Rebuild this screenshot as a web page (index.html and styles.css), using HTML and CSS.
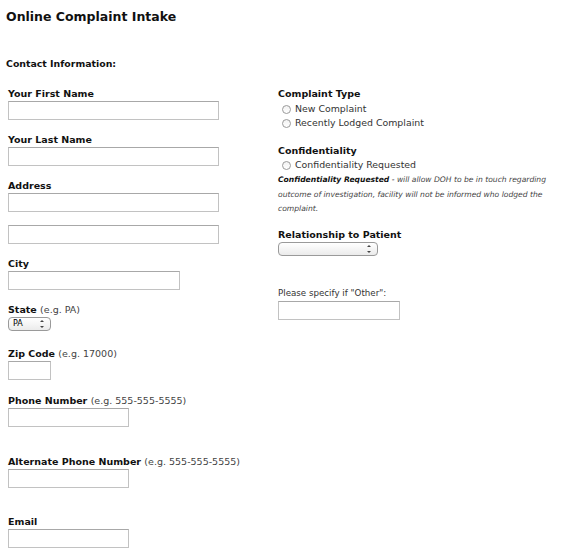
FILE: index.html
```html
<!DOCTYPE html>
<html>
<head>
<meta charset="utf-8">
<link rel="stylesheet" href="styles.css">
</head>
<body>
<h1 class="title">Online Complaint Intake</h1>
<h2 class="section">Contact Information:</h2>
<div class="cols">
  <div class="left">
    <div class="field"><div class="label">Your First Name</div><input class="text w-long" type="text"></div>
    <div class="field"><div class="label">Your Last Name</div><input class="text w-long" type="text"></div>
    <div class="field"><div class="label">Address</div><input class="text w-long" type="text"></div>
    <div class="field nolabel"><input class="text w-long" type="text"></div>
    <div class="field"><div class="label">City</div><input class="text w-city" type="text"></div>
    <div class="field state"><div class="label">State <span class="hint">(e.g. PA)</span></div>
      <span class="sel sel-state"><select><option>PA</option></select><span class="arrows"></span></span></div>
    <div class="field zip"><div class="label">Zip Code <span class="hint">(e.g. 17000)</span></div><input class="text w-zip" type="text"></div>
    <div class="field wide-gap"><div class="label">Phone Number <span class="hint">(e.g. 555-555-5555)</span></div><input class="text w-phone" type="text"></div>
    <div class="field wide-gap2"><div class="label">Alternate Phone Number <span class="hint">(e.g. 555-555-5555)</span></div><input class="text w-phone" type="text"></div>
    <div class="field"><div class="label">Email</div><input class="text w-phone" type="text"></div>
  </div>
  <div class="right">
    <div class="group first">
      <div class="label">Complaint Type</div>
      <label class="radio"><span class="dot"></span>New Complaint</label>
      <label class="radio"><span class="dot"></span>Recently Lodged Complaint</label>
    </div>
    <div class="group conf">
      <div class="label">Confidentiality</div>
      <label class="radio"><span class="dot"></span>Confidentiality Requested</label>
      <p class="note"><b>Confidentiality Requested</b> - will allow DOH to be in touch regarding outcome of investigation, facility will not be informed who lodged the complaint.</p>
    </div>
    <div class="group rel">
      <div class="label">Relationship to Patient</div>
      <span class="sel sel-rel"><select><option></option></select><span class="arrows"></span></span>
    </div>
    <div class="group">
      <div class="plain">Please specify if "Other":</div>
      <input class="text w-other" type="text">
    </div>
  </div>
</div>
</body>
</html>
```
FILE: styles.css
```css
html, body { background: #fff; }
body {
  margin: 0;
  padding: 9px 0 0 6px;
  font-family: "DejaVu Sans", Verdana, sans-serif;
  color: #111;
}
.title {
  margin: 0;
  font-size: 12.5px;
  line-height: 16px;
  font-weight: bold;
}
.section {
  margin: 32px 0 0 0;
  font-size: 9.4px;
  line-height: 14px;
  font-weight: bold;
}
.cols {
  display: flex;
  margin-top: 16px;
}
.left {
  flex: none;
  box-sizing: border-box;
  width: 272px;
  padding-left: 2px;
}
.right {
  flex: none;
  width: 290px;
}
.label {
  font-size: 9.5px;
  line-height: 14px;
  font-weight: bold;
  color: #111;
}
.hint {
  font-weight: normal;
  color: #444;
}
.field { margin-bottom: 13px; }
.field.state { margin-bottom: 16px; }
.field.zip { margin-bottom: 14px; }
.field.wide-gap { margin-bottom: 28px; }
.field.wide-gap2 { margin-bottom: 27px; }
.text {
  display: block;
  box-sizing: border-box;
  height: 19px;
  margin: 0;
  padding: 0 3px;
  border: 1px solid #c2c2c2;
  border-top-color: #a8a8a8;
  background: #fff;
  font: 10px "DejaVu Sans", sans-serif;
}
.w-long { width: 211px; }
.w-city { width: 172px; }
.w-zip { width: 43px; }
.w-phone { width: 121px; }
.w-other { width: 122px; }
.sel {
  position: relative;
  display: block;
  width: fit-content;
}
.sel select {
  appearance: none;
  -webkit-appearance: none;
  display: block;
  box-sizing: border-box;
  height: 14px;
  margin: 0;
  padding: 0 0 1px 4px;
  border: 1px solid #9a9a9a;
  border-radius: 4px;
  background: linear-gradient(#ffffff, #ebebeb);
  font: 8px/11px "DejaVu Sans", sans-serif;
  color: #000;
}
.sel-state select { width: 43px; }
.sel-rel select { width: 100px; }
.arrows {
  position: absolute;
  right: 7px;
  top: 3px;
  width: 4px;
  height: 8px;
}
.arrows::before, .arrows::after {
  content: "";
  position: absolute;
  left: 0;
  border-left: 2px solid transparent;
  border-right: 2px solid transparent;
}
.arrows::before { top: 0; border-bottom: 2.5px solid #444; }
.arrows::after { bottom: 0; border-top: 2.5px solid #444; }
.group { margin-bottom: 14px; }
.group.first .radio:first-of-type { margin-top: 1px; }
.group.conf { margin-bottom: 0; }
.group.rel { margin-bottom: 30px; }
.radio {
  display: flex;
  align-items: center;
  font-size: 9.4px;
  line-height: 14px;
  color: #333;
}
.dot {
  display: inline-block;
  box-sizing: border-box;
  width: 9px;
  height: 9px;
  margin: 0 4px 0 4px;
  border: 1px solid #9a9a9a;
  border-radius: 50%;
  background: linear-gradient(#f2f2f2, #ffffff);
}
.note {
  margin: 1px 0 11.5px 0;
  width: 290px;
  font-size: 7.6px;
  line-height: 14.5px;
  font-style: italic;
  color: #444;
}
.note b { color: #111; }
.plain {
  font-size: 8.7px;
  line-height: 14px;
  color: #333;
  margin-bottom: 1px;
}
```
